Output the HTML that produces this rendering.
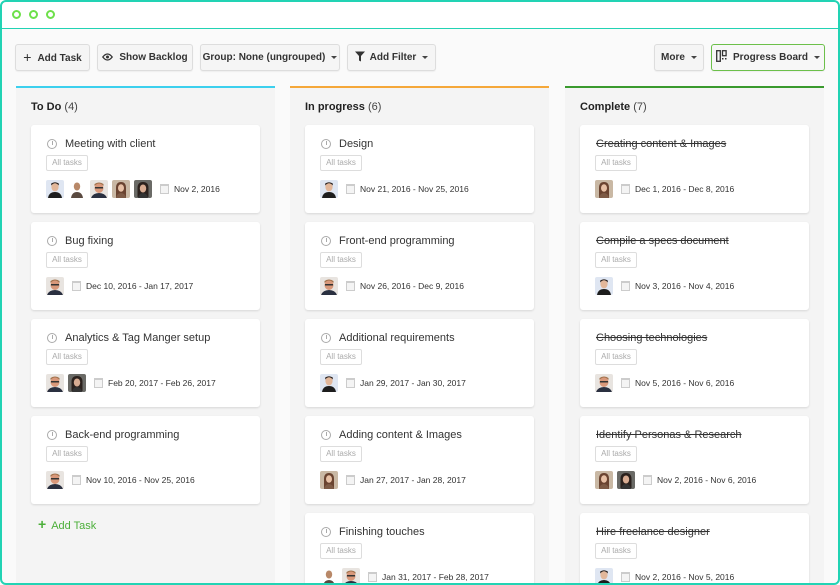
<!DOCTYPE html>
<html><head><meta charset="utf-8"><style>
*{box-sizing:border-box;margin:0;padding:0}
body{width:840px;height:585px;overflow:hidden;background:#fff;font-family:"Liberation Sans",Arial,sans-serif;color:#333}
.frame{position:absolute;left:0;top:0;width:840px;height:585px;overflow:hidden;background:#fafafa}
.bord{position:absolute;left:0;top:0;width:840px;height:585px;border:2px solid #22d3b4;border-radius:6px;z-index:10}
.top{position:absolute;left:0;top:0;right:0;height:29px;background:#fff;border-bottom:1px solid #22d3b4}
.dot{position:absolute;top:10px;width:9px;height:9px;border:2px solid #6ee04a;border-radius:50%}
.btn{position:absolute;top:44px;height:27px;border:1px solid #ddd;border-radius:3px;background:#f5f5f5;font-size:10px;font-weight:bold;color:#333;line-height:25px;text-align:center;white-space:nowrap;box-shadow:0 1px 1px rgba(0,0,0,.05)}
.car{display:inline-block;border-left:3px solid transparent;border-right:3px solid transparent;border-top:3px solid #444;vertical-align:middle;margin-left:6px}
.col{position:absolute;top:86px;width:259px;height:520px;background:#f4f4f4;border-top:2px solid}
.ch{position:absolute;left:15px;top:13px;font-size:11px;font-weight:bold;color:#222}
.ch span{font-weight:normal;color:#444}
.card{position:absolute;left:15px;width:229px;height:88px;background:#fff;border-radius:3px;box-shadow:0 1px 2px rgba(0,0,0,.12)}
.clk{position:absolute;left:16px;top:14px;width:10px;height:10px;border:1px solid #aaa;border-radius:50%}
.clk:after{content:"";position:absolute;left:3.5px;top:1px;width:1px;height:4px;background:#aaa}
.tt{position:absolute;left:34px;top:13px;font-size:11px;color:#333;white-space:nowrap}
.done .tt{left:16px;text-decoration:line-through}
.done .clk{display:none}
.tag{position:absolute;left:15px;top:30px;width:42px;height:16px;border:1px solid #ddd;border-radius:2px;font-size:8px;color:#aaa;line-height:14px;text-align:center}
.row{position:absolute;left:15px;top:55px;height:18px;display:flex;align-items:center}
.av{width:18px;height:18px;margin-right:4px;border-radius:2px;overflow:hidden}
.cal{width:9px;height:10px;border:1px solid #ccc;border-top-width:2px;margin:0 5px 0 4px;background:#f4f4f4}
.dt{font-size:8.5px;color:#333;white-space:nowrap}
</style></head><body>
<svg width="0" height="0" style="position:absolute"><defs>
<symbol id="a" viewBox="0 0 18 18"><rect width="18" height="18" fill="#dfe6f2"/><ellipse cx="9" cy="7" rx="3.6" ry="4.4" fill="#e2b79a"/><path d="M5.2 5.5q3.8-4.5 7.6 0v-2q-3.8-2.5-7.6 0z" fill="#2a2220"/><path d="M2 18q1-6 7-6t7 6z" fill="#1d1d1d"/></symbol>
<symbol id="b" viewBox="0 0 18 18"><rect width="18" height="18" fill="#fff"/><ellipse cx="9" cy="6.5" rx="3.2" ry="4" fill="#b88868"/><path d="M3 18q1-6 6-6t6 6z" fill="#5a4a40"/></symbol>
<symbol id="c" viewBox="0 0 18 18"><rect width="18" height="18" fill="#e8e4e0"/><ellipse cx="9" cy="8" rx="4.5" ry="5" fill="#d9987a"/><path d="M4.5 6q4.5-5 9 0v-2q-4.5-3-9 0z" fill="#a0704a"/><rect x="5" y="7" width="8" height="1.5" fill="#333"/><path d="M1 18q2-5 8-5t8 5z" fill="#2a3040"/></symbol>
<symbol id="d" viewBox="0 0 18 18"><rect width="18" height="18" fill="#c9b8a4"/><path d="M4 18V8q0-6 5-6t5 6v10z" fill="#6a4330"/><ellipse cx="9" cy="8" rx="3" ry="3.8" fill="#e7c0a5"/><path d="M4 18q1-5 5-5t5 5z" fill="#7d5a45"/></symbol>
<symbol id="e" viewBox="0 0 18 18"><rect width="18" height="18" fill="#6a6a66"/><path d="M3.5 17V8q0-6 5.5-6t5.5 6v9z" fill="#2b211d"/><ellipse cx="9" cy="8.5" rx="3.2" ry="4" fill="#d8ac92"/><path d="M4 18q1-5 5-5t5 5z" fill="#333"/></symbol>
</defs></svg>
<div class="frame">
<div class="top"><div class="dot" style="left:12px"></div><div class="dot" style="left:29px"></div><div class="dot" style="left:46px"></div></div>

<div class="btn" style="left:15px;width:75px"><span style="font-size:14px;font-weight:normal;vertical-align:-1px;margin-right:6px">+</span>Add Task</div>
<div class="btn" style="left:97px;width:96px"><svg width="11" height="8" viewBox="0 0 11 8" style="margin-right:6px;vertical-align:-1px"><path d="M0.8 4Q5.5-2 10.2 4Q5.5 10 0.8 4z" fill="none" stroke="#333" stroke-width="1.3"/><circle cx="5.5" cy="4" r="1.5" fill="#333"/></svg>Show Backlog</div>
<div class="btn" style="left:200px;width:140px">Group: None (ungrouped)<span class="car"></span></div>
<div class="btn" style="left:347px;width:89px"><svg width="10" height="11" viewBox="0 0 10 11" style="margin-right:5px;vertical-align:-2px"><path d="M0 0.5h10L6 5v5.5L4 9.5V5z" fill="#333"/></svg>Add Filter<span class="car"></span></div>
<div class="btn" style="left:654px;width:50px">More<span class="car"></span></div>
<div class="btn" style="left:711px;width:114px;border-color:#6cc04a;background:#f7f7f7"><svg width="11" height="12" viewBox="0 0 11 12" style="margin-right:6px;vertical-align:-2px"><rect x="0.7" y="0.7" width="3.6" height="10.6" fill="none" stroke="#333" stroke-width="1.3"/><rect x="6.5" y="0.7" width="3.6" height="5" fill="none" stroke="#333" stroke-width="1.3"/><rect x="6" y="8" width="1.5" height="1.5" fill="#333"/><rect x="9" y="8" width="1.5" height="1.5" fill="#333"/></svg>Progress Board<span class="car"></span></div>

<!-- To Do -->
<div class="col" style="left:16px;border-color:#3cd0ee">
<div class="ch">To Do <span>(4)</span></div>
<div class="card" style="top:37px"><div class="clk"></div><div class="tt">Meeting with client</div><div class="tag">All tasks</div><div class="row"><svg class="av"><use href="#a"/></svg><svg class="av"><use href="#b"/></svg><svg class="av"><use href="#c"/></svg><svg class="av"><use href="#d"/></svg><svg class="av"><use href="#e"/></svg><div class="cal"></div><div class="dt">Nov 2, 2016</div></div></div>
<div class="card" style="top:134px"><div class="clk"></div><div class="tt">Bug fixing</div><div class="tag">All tasks</div><div class="row"><svg class="av"><use href="#c"/></svg><div class="cal"></div><div class="dt">Dec 10, 2016 - Jan 17, 2017</div></div></div>
<div class="card" style="top:231px"><div class="clk"></div><div class="tt">Analytics &amp; Tag Manger setup</div><div class="tag">All tasks</div><div class="row"><svg class="av"><use href="#c"/></svg><svg class="av"><use href="#e"/></svg><div class="cal"></div><div class="dt">Feb 20, 2017 - Feb 26, 2017</div></div></div>
<div class="card" style="top:328px"><div class="clk"></div><div class="tt">Back-end programming</div><div class="tag">All tasks</div><div class="row"><svg class="av"><use href="#c"/></svg><div class="cal"></div><div class="dt">Nov 10, 2016 - Nov 25, 2016</div></div></div>
<div style="position:absolute;left:22px;top:428px;font-size:11px;color:#4caf3a"><span style="font-size:14px;font-weight:bold;margin-right:5px">+</span>Add Task</div>
</div>

<!-- In progress -->
<div class="col" style="left:290px;border-color:#f5a83a">
<div class="ch">In progress <span>(6)</span></div>
<div class="card" style="top:37px"><div class="clk"></div><div class="tt">Design</div><div class="tag">All tasks</div><div class="row"><svg class="av"><use href="#a"/></svg><div class="cal"></div><div class="dt">Nov 21, 2016 - Nov 25, 2016</div></div></div>
<div class="card" style="top:134px"><div class="clk"></div><div class="tt">Front-end programming</div><div class="tag">All tasks</div><div class="row"><svg class="av"><use href="#c"/></svg><div class="cal"></div><div class="dt">Nov 26, 2016 - Dec 9, 2016</div></div></div>
<div class="card" style="top:231px"><div class="clk"></div><div class="tt">Additional requirements</div><div class="tag">All tasks</div><div class="row"><svg class="av"><use href="#a"/></svg><div class="cal"></div><div class="dt">Jan 29, 2017 - Jan 30, 2017</div></div></div>
<div class="card" style="top:328px"><div class="clk"></div><div class="tt">Adding content &amp; Images</div><div class="tag">All tasks</div><div class="row"><svg class="av"><use href="#d"/></svg><div class="cal"></div><div class="dt">Jan 27, 2017 - Jan 28, 2017</div></div></div>
<div class="card" style="top:425px"><div class="clk"></div><div class="tt">Finishing touches</div><div class="tag">All tasks</div><div class="row"><svg class="av"><use href="#b"/></svg><svg class="av"><use href="#c"/></svg><div class="cal"></div><div class="dt">Jan 31, 2017 - Feb 28, 2017</div></div></div>
</div>

<!-- Complete -->
<div class="col" style="left:565px;border-color:#3a9a2e">
<div class="ch">Complete <span>(7)</span></div>
<div class="card done" style="top:37px"><div class="clk"></div><div class="tt">Creating content &amp; Images</div><div class="tag">All tasks</div><div class="row"><svg class="av"><use href="#d"/></svg><div class="cal"></div><div class="dt">Dec 1, 2016 - Dec 8, 2016</div></div></div>
<div class="card done" style="top:134px"><div class="clk"></div><div class="tt">Compile a specs document</div><div class="tag">All tasks</div><div class="row"><svg class="av"><use href="#a"/></svg><div class="cal"></div><div class="dt">Nov 3, 2016 - Nov 4, 2016</div></div></div>
<div class="card done" style="top:231px"><div class="clk"></div><div class="tt">Choosing technologies</div><div class="tag">All tasks</div><div class="row"><svg class="av"><use href="#c"/></svg><div class="cal"></div><div class="dt">Nov 5, 2016 - Nov 6, 2016</div></div></div>
<div class="card done" style="top:328px"><div class="clk"></div><div class="tt">Identify Personas &amp; Research</div><div class="tag">All tasks</div><div class="row"><svg class="av"><use href="#d"/></svg><svg class="av"><use href="#e"/></svg><div class="cal"></div><div class="dt">Nov 2, 2016 - Nov 6, 2016</div></div></div>
<div class="card done" style="top:425px"><div class="clk"></div><div class="tt">Hire freelance designer</div><div class="tag">All tasks</div><div class="row"><svg class="av"><use href="#a"/></svg><div class="cal"></div><div class="dt">Nov 2, 2016 - Nov 5, 2016</div></div></div>
</div>
</div>
<div class="bord"></div>
</body></html>
